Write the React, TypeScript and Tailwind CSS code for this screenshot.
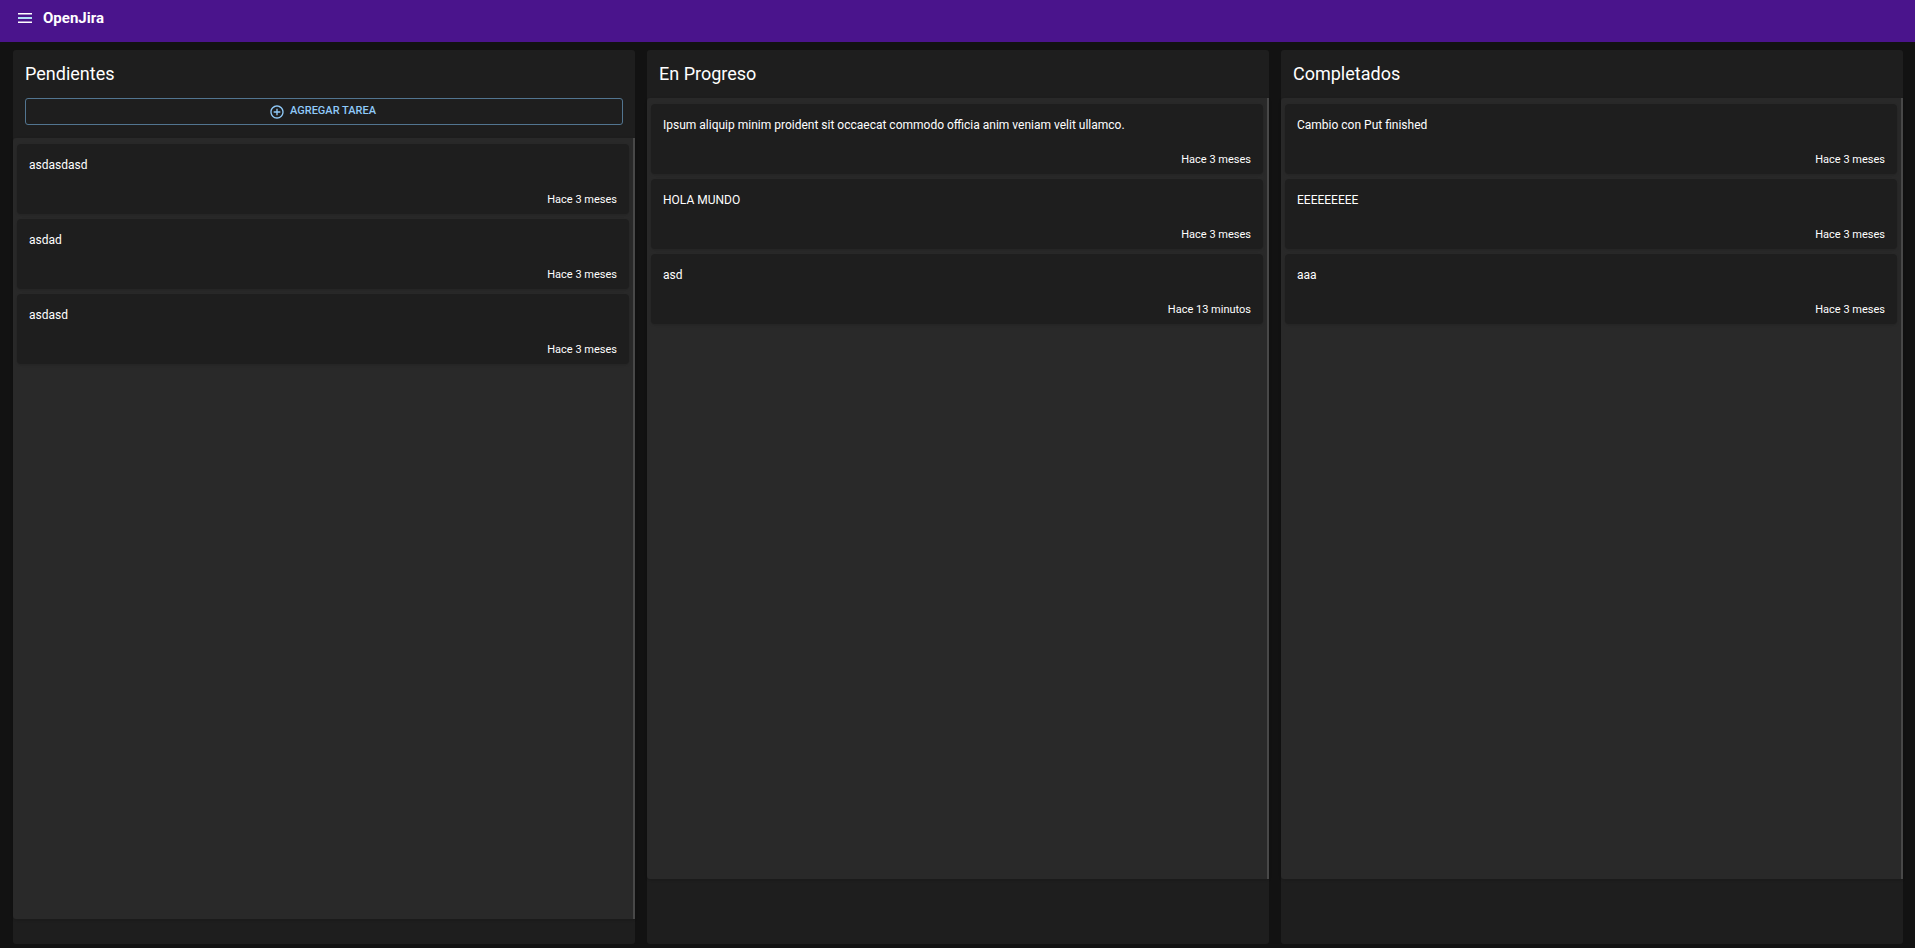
import { useState } from 'react';

interface Entry {
  description: string;
  createdAt: string;
}

interface Column {
  title: string;
  canAdd?: boolean;
  entries: Entry[];
}

const columns: Column[] = [
  {
    title: 'Pendientes',
    canAdd: true,
    entries: [
      { description: 'asdasdasd', createdAt: 'Hace 3 meses' },
      { description: 'asdad', createdAt: 'Hace 3 meses' },
      { description: 'asdasd', createdAt: 'Hace 3 meses' },
    ],
  },
  {
    title: 'En Progreso',
    entries: [
      {
        description: 'Ipsum aliquip minim proident sit occaecat commodo officia anim veniam velit ullamco.',
        createdAt: 'Hace 3 meses',
      },
      { description: 'HOLA MUNDO', createdAt: 'Hace 3 meses' },
      { description: 'asd', createdAt: 'Hace 13 minutos' },
    ],
  },
  {
    title: 'Completados',
    entries: [
      { description: 'Cambio con Put finished', createdAt: 'Hace 3 meses' },
      { description: 'EEEEEEEEE', createdAt: 'Hace 3 meses' },
      { description: 'aaa', createdAt: 'Hace 3 meses' },
    ],
  },
];

function Navbar() {
  return (
    <header className="h-[42px] shrink-0 bg-[#4a148c] flex items-start gap-[9px] px-4 pt-2">
      <button type="button" aria-label="Menú" className="h-5 w-[18px] flex items-center justify-center text-white">
        <svg viewBox="0 0 18 18" className="size-[18px]" fill="currentColor">
          <path d="M2 4h14v1.5H2z M2 12.5h14V14H2z" />
          <path d="M2 8h14v2H2z" fill="#b3e0f7" />
        </svg>
      </button>
      <h1 className="text-[15px] leading-5 font-bold">OpenJira</h1>
    </header>
  );
}

function EntryCard({ entry }: { entry: Entry }) {
  return (
    <article className="h-[70px] rounded-[4px] bg-[#1e1e1e] shadow-sm flex flex-col justify-between px-3 pt-3 pb-[6px]">
      <p className="text-[12px] leading-[18px]">{entry.description}</p>
      <p className="text-[11px] leading-4 text-right">{entry.createdAt}</p>
    </article>
  );
}

function EntryColumn({ column }: { column: Column }) {
  return (
    <section className="h-[calc(100vh-54px)] rounded-[3px] bg-[#1e1e1e]">
      <h2 className="px-3 pt-3 pb-3 text-[18px] leading-6">{column.title}</h2>
      {column.canAdd && (
        <div className="px-3 pb-[13px]">
          <button
            type="button"
            className="w-full h-[27px] rounded-[3px] border border-[#527590] text-[#90caf9] flex items-start justify-center gap-[5px] pr-[3px] pt-[4px]"
          >
            <svg viewBox="0 0 24 24" className="size-4 mt-px" fill="currentColor">
              <path d="M13 7h-2v4H7v2h4v4h2v-4h4v-2h-4V7zm-1-5C6.48 2 2 6.48 2 12s4.48 10 10 10 10-4.48 10-10S17.52 2 12 2zm0 18c-4.41 0-8-3.59-8-8s3.59-8 8-8 8 3.59 8 8-3.59 8-8 8z" />
            </svg>
            <span className="text-[11px] leading-4 font-medium uppercase">Agregar tarea</span>
          </button>
        </div>
      )}
      <div className="h-[calc(100vh-167px)] rounded-l-[3px] border-r-2 border-[#484848] bg-[#292929] shadow-sm flex flex-col gap-[5px] pl-1 pr-1 pt-[6px]">
        {column.entries.map((entry) => (
          <EntryCard key={entry.description} entry={entry} />
        ))}
      </div>
    </section>
  );
}

function App() {
  const [board] = useState<Column[]>(columns);

  return (
    <div className="min-h-screen flex flex-col bg-[#121212] text-white font-['Roboto',sans-serif]">
      <Navbar />
      <main className="grid grid-cols-3 gap-3 pl-[13px] pr-3 pt-2">
        {board.map((column) => (
          <EntryColumn key={column.title} column={column} />
        ))}
      </main>
    </div>
  );
}

export default App;
